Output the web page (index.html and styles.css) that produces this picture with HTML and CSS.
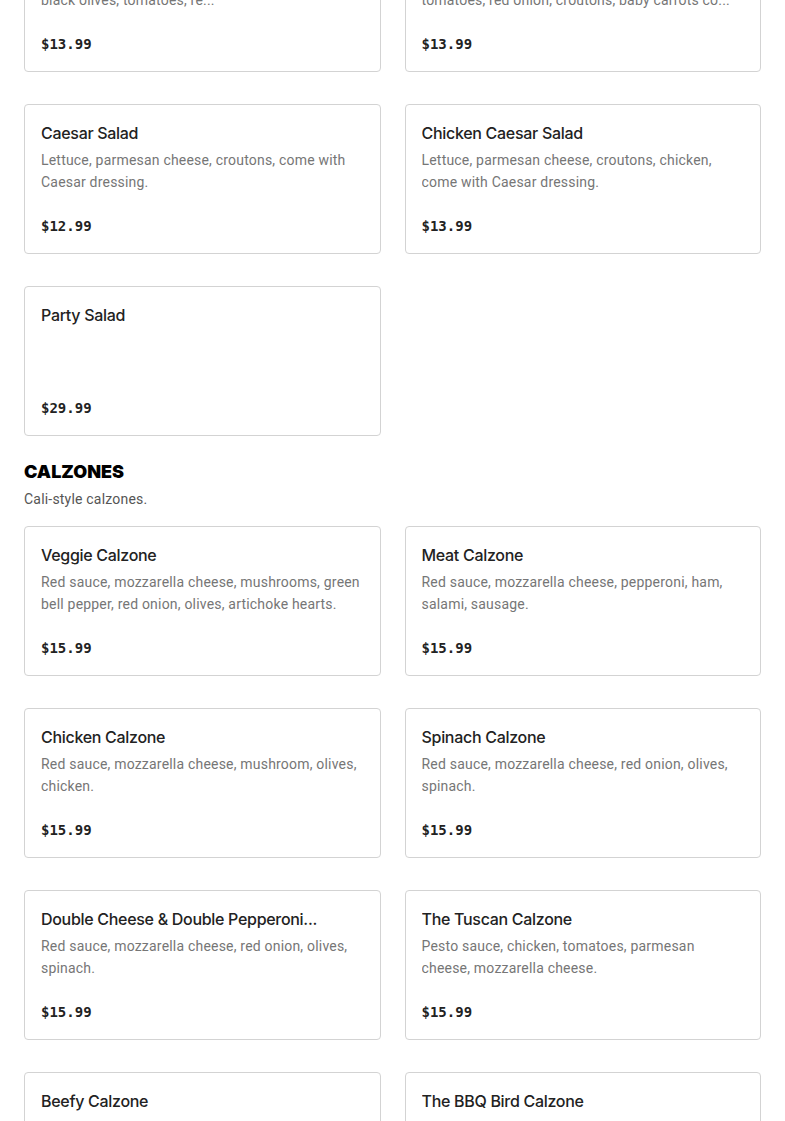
FILE: index.html
```html
<!DOCTYPE html>
<html>
  <head>
    <title>Menu</title>
    <meta name="viewport" content="width=device-width, initial-scale=1" />
    <link rel="stylesheet" href="styles.css">
  </head>
  <body>
    <main class="menu">
      <section class="menu-section">
        <div class="item-grid">
          <div class="item-card">
            <h3 class="item-name">Greek Salad</h3>
            <p class="item-desc">Lettuce, feta cheese, cucumbers, pepperoncini, black olives, tomatoes, re...</p>
            <div class="item-price">$13.99</div>
          </div>
          <div class="item-card">
            <h3 class="item-name">Garden Salad</h3>
            <p class="item-desc">Lettuce, cucumbers, green bell pepper, olives, tomatoes, red onion, croutons, baby carrots co...</p>
            <div class="item-price">$13.99</div>
          </div>
          <div class="item-card">
            <h3 class="item-name">Caesar Salad</h3>
            <p class="item-desc">Lettuce, parmesan cheese, croutons, come with Caesar dressing.</p>
            <div class="item-price">$12.99</div>
          </div>
          <div class="item-card">
            <h3 class="item-name">Chicken Caesar Salad</h3>
            <p class="item-desc">Lettuce, parmesan cheese, croutons, chicken, come with Caesar dressing.</p>
            <div class="item-price">$13.99</div>
          </div>
          <div class="item-card">
            <h3 class="item-name">Party Salad</h3>
            <div class="item-price">$29.99</div>
          </div>
        </div>
      </section>

      <section class="menu-section">
        <h2 class="section-title">Calzones</h2>
        <p class="section-desc">Cali-style calzones.</p>
        <div class="item-grid">
          <div class="item-card">
            <h3 class="item-name">Veggie Calzone</h3>
            <p class="item-desc">Red sauce, mozzarella cheese, mushrooms, green bell pepper, red onion, olives, artichoke hearts.</p>
            <div class="item-price">$15.99</div>
          </div>
          <div class="item-card">
            <h3 class="item-name">Meat Calzone</h3>
            <p class="item-desc">Red sauce, mozzarella cheese, pepperoni, ham, salami, sausage.</p>
            <div class="item-price">$15.99</div>
          </div>
          <div class="item-card">
            <h3 class="item-name">Chicken Calzone</h3>
            <p class="item-desc">Red sauce, mozzarella cheese, mushroom, olives, chicken.</p>
            <div class="item-price">$15.99</div>
          </div>
          <div class="item-card">
            <h3 class="item-name">Spinach Calzone</h3>
            <p class="item-desc">Red sauce, mozzarella cheese, red onion, olives, spinach.</p>
            <div class="item-price">$15.99</div>
          </div>
          <div class="item-card">
            <h3 class="item-name">Double Cheese &amp; Double Pepperoni...</h3>
            <p class="item-desc">Red sauce, mozzarella cheese, red onion, olives, spinach.</p>
            <div class="item-price">$15.99</div>
          </div>
          <div class="item-card">
            <h3 class="item-name">The Tuscan Calzone</h3>
            <p class="item-desc">Pesto sauce, chicken, tomatoes, parmesan cheese, mozzarella cheese.</p>
            <div class="item-price">$15.99</div>
          </div>
          <div class="item-card">
            <h3 class="item-name">Beefy Calzone</h3>
            <p class="item-desc">Red sauce, mozzarella cheese, ground beef, red onion, green bell pepper.</p>
            <div class="item-price">$15.99</div>
          </div>
          <div class="item-card">
            <h3 class="item-name">The BBQ Bird Calzone</h3>
            <p class="item-desc">BBQ sauce, mozzarella cheese, chicken, red onion, cilantro.</p>
            <div class="item-price">$15.99</div>
          </div>
        </div>
      </section>
    </main>
  </body>
</html>
```

FILE: styles.css
```css
body {
  margin: 0;
  font-family: Roboto, "Liberation Sans", sans-serif;
  background-color: #ffffff;
  color: #222222;
}
.menu {
  padding: 0 24px 40px;
  margin-top: -78px; /* page is scrolled part way down the menu */
}
.menu-section {
  padding-top: 24px;
}
.menu-section:first-child {
  padding-top: 0;
}
.section-title {
  margin: 0 0 4px;
  font-family: Inter, "Liberation Sans", sans-serif;
  font-size: 18px;
  line-height: 24px;
  font-weight: 900;
  text-transform: uppercase;
  color: #000000;
}
.section-desc {
  margin: 0 0 16px;
  font-size: 14px;
  line-height: 22px;
  color: #555555;
  letter-spacing: 0.2px;
}
.item-grid {
  display: grid;
  grid-template-columns: 1fr 1fr;
  column-gap: 24px;
  row-gap: 32px;
}
.item-card {
  display: flex;
  flex-direction: column;
  box-sizing: border-box;
  height: 150px;
  padding: 16px 16px 17px;
  border: 1px solid #d3d3d3;
  border-radius: 4px;
  min-width: 0;
}
.item-name {
  margin: 0;
  font-family: Inter, "Liberation Sans", sans-serif;
  font-size: 16px;
  line-height: 24px;
  font-weight: 500;
  letter-spacing: -0.3px;
  color: #222222;
  white-space: nowrap;
  overflow: hidden;
  text-overflow: ellipsis;
}
.item-desc {
  margin: 4px 0 0;
  font-size: 14px;
  line-height: 22px;
  letter-spacing: 0.2px;
  color: #767676;
  display: -webkit-box;
  -webkit-line-clamp: 2;
  -webkit-box-orient: vertical;
  overflow: hidden;
}
.item-price {
  margin-top: auto;
  font-family: "DejaVu Sans Mono", "Liberation Mono", monospace;
  font-size: 14px;
  line-height: 20px;
  font-weight: bold;
  color: #222222;
}
```
